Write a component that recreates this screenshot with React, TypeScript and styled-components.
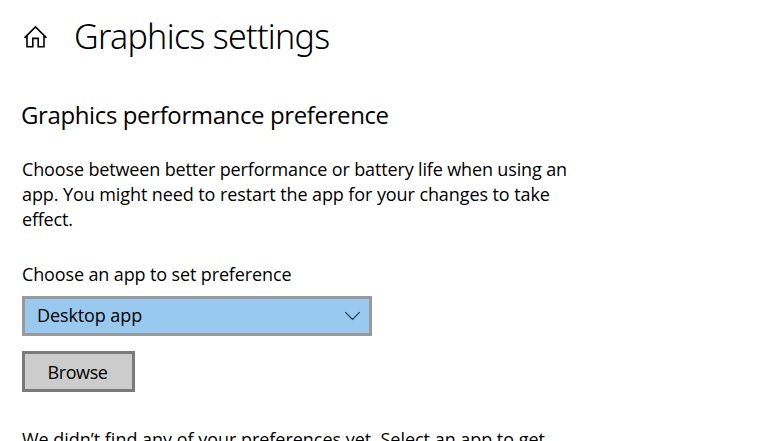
import React from 'react';
import styled, { createGlobalStyle } from 'styled-components';

const GlobalStyle = createGlobalStyle`
  html, body, #root { height: 100%; }
  body {
    margin: 0;
    overflow: hidden;
    background: #fff;
    color: #000;
    font-family: 'Open Sans', 'Noto Sans', sans-serif;
  }
`;

const Page = styled.main`
  box-sizing: border-box;
  height: 441px;
  overflow: hidden;
  display: flex;
  flex-direction: column;
  align-items: flex-start;
  padding: 14px 0 0 22px;

  > * {
    flex-shrink: 0;
  }
`;

const Header = styled.header`
  display: flex;
  align-items: center;
  height: 44px;
`;

const HomeIcon = styled.svg`
  width: 26px;
  height: 26px;
  margin: 4px 25px 0 1px;
`;

const Title = styled.h1`
  margin: 0;
  font: 300 34px/44px 'Noto Sans', sans-serif;
  letter-spacing: -0.7px;
  white-space: nowrap;
`;

const SectionTitle = styled.h2`
  margin: 41px 0 0 -1px;
  font-size: 24px;
  font-weight: 400;
  line-height: 32px;
  letter-spacing: -0.38px;
  white-space: nowrap;
`;

const Text = styled.p`
  margin: 0;
  font-size: 18px;
  line-height: 25px;
  white-space: nowrap;
`;

const Line = styled.span<{ $tracking: number }>`
  display: block;
  letter-spacing: ${(p) => p.$tracking}px;
`;

const Description = styled(Text)`
  margin-top: 26px;
`;

const Label = styled(Text)`
  margin-top: 30px;
  letter-spacing: -0.13px;
`;

const Select = styled.button`
  box-sizing: border-box;
  display: flex;
  align-items: center;
  justify-content: space-between;
  width: 350px;
  height: 40px;
  margin: 9px 0 15px;
  padding: 0 8px 2px 12px;
  border: 3px solid #999;
  border-radius: 0;
  background: #99c9ef;
  color: #000;
  font: 400 18px/25px 'Open Sans', sans-serif;
  letter-spacing: -0.1px;
`;

const Chevron = styled.svg`
  width: 17px;
  height: 10px;
  margin-top: 2px;
`;

const BrowseButton = styled.button`
  box-sizing: border-box;
  width: 113px;
  height: 41px;
  padding: 1px 2px 0 0;
  border: 3px solid #7a7a7a;
  border-radius: 0;
  background: #ccc;
  color: #000;
  font: 400 18px/25px 'Open Sans', sans-serif;
  letter-spacing: -0.4px;
`;

const EmptyMessage = styled(Text)`
  margin-top: 35px;
  font-size: 17.95px;
`;

export default function App() {
  return (
    <>
      <GlobalStyle />
      <Page>
        <Header>
          <HomeIcon viewBox="0 0 26 26" fill="none" stroke="#000" strokeWidth="1.6">
            <path d="M1.5 12.9 12.5 1.9 23.5 12.9" />
            <path d="M4 11V21.8H9.8V13.4H15.2V21.8H21V11" />
          </HomeIcon>
          <Title>Graphics settings</Title>
        </Header>
        <SectionTitle>Graphics performance preference</SectionTitle>
        <Description>
          <Line $tracking={-0.145}>Choose between better performance or battery life when using an</Line>
          <Line $tracking={-0.09}>app. You might need to restart the app for your changes to take</Line>
          <Line $tracking={-0.2}>effect.</Line>
        </Description>
        <Label>Choose an app to set preference</Label>
        <Select>
          Desktop app
          <Chevron viewBox="0 0 17 10" fill="none" stroke="#26323c" strokeWidth="1.15">
            <path d="M1.3 1.2 8.5 8.4 15.7 1.2" />
          </Chevron>
        </Select>
        <BrowseButton>Browse</BrowseButton>
        <EmptyMessage>We didn’t find any of your preferences yet. Select an app to get</EmptyMessage>
      </Page>
    </>
  );
}
